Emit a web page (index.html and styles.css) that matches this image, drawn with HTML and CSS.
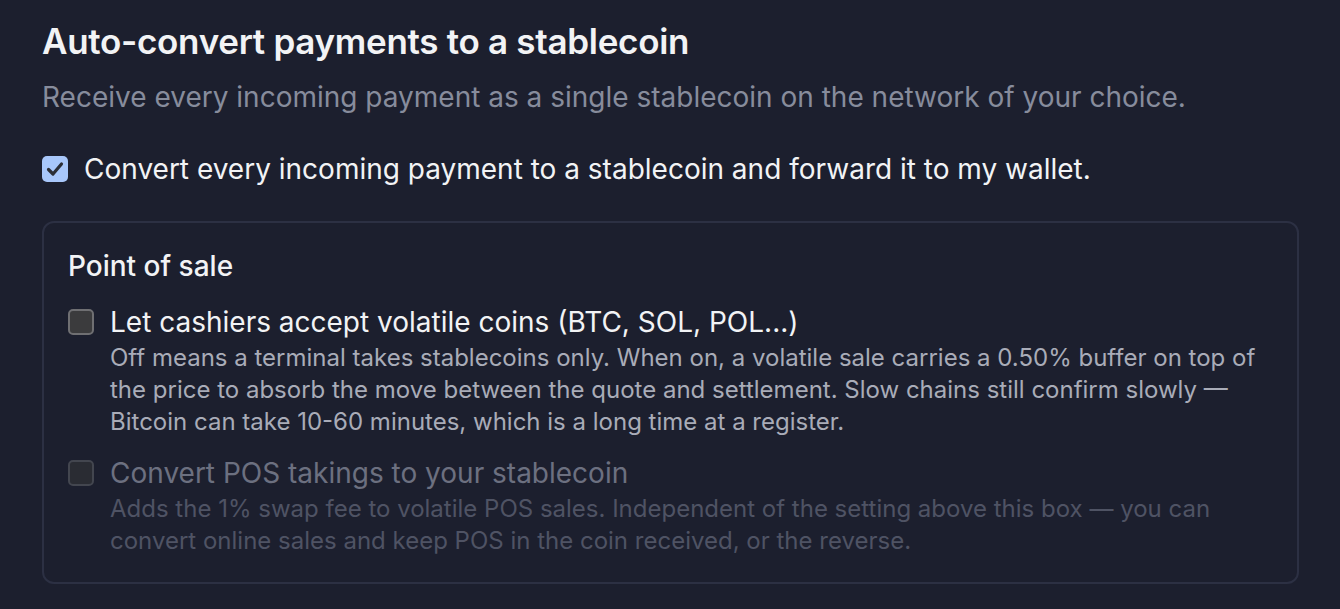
FILE: index.html
```html
<!DOCTYPE html>
<html lang="en">
<head>
  <meta charset="UTF-8">
  <title>Auto-convert settings</title>
  <link rel="stylesheet" href="styles.css">
</head>
<body>

<section class="settings">
  <h2>Auto-convert payments to a stablecoin</h2>
  <p class="lead">Receive every incoming payment as a single stablecoin on the network of your choice.</p>

  <label class="main-toggle">
    <span class="box checked">
      <svg viewBox="0 0 26 26" width="26" height="26"><path d="M6.5 13.5l4.5 4.5 8.5-10" fill="none" stroke="#2b2e36" stroke-width="3.2" stroke-linecap="round" stroke-linejoin="round"/></svg>
    </span>
    <span>Convert every incoming payment to a stablecoin and forward it to my wallet.</span>
  </label>

  <div class="pos-card">
    <h3>Point of sale</h3>

    <div class="option">
      <span class="box"></span>
      <div>
        <div class="option-title">Let cashiers accept volatile coins (BTC, SOL, POL...)</div>
        <div class="option-desc">Off means a terminal takes stablecoins only. When on, a volatile sale carries a 0.50% buffer on top of the price to absorb the move between the quote and settlement. Slow chains still confirm slowly — Bitcoin can take 10-60 minutes, which is a long time at a register.</div>
      </div>
    </div>

    <div class="option disabled">
      <span class="box"></span>
      <div>
        <div class="option-title">Convert POS takings to your stablecoin</div>
        <div class="option-desc">Adds the 1% swap fee to volatile POS sales. Independent of the setting above this box — you can convert online sales and keep POS in the coin received, or the reverse.</div>
      </div>
    </div>
  </div>
</section>

</body>
</html>
```

FILE: styles.css
```css
:root {
  --bg: #1c1f2e;
  --border: #2c3043;
  --text: #f2f3f5;
  --muted: #878c9c;
  --sub: #a9acb8;
  --dim: #6c7080;
  --dim-sub: #4f5364;
}
body {
  margin: 0;
  background: var(--bg);
  color: var(--text);
  font-family: Inter, "Noto Sans", sans-serif;
}
.settings {
  padding: 18px 41px 26px 42px;
}
h2 {
  margin: 0;
  font-size: 35px;
  font-weight: 600;
  line-height: 46px;
  letter-spacing: -0.3px;
}
.lead {
  margin: 13px 0 0;
  font-size: 28px;
  line-height: 40px;
  color: var(--muted);
}
.main-toggle {
  display: flex;
  align-items: center;
  gap: 16px;
  margin-top: 32px;
  font-size: 28px;
  line-height: 40px;
}
.box {
  flex: none;
  width: 26px;
  height: 26px;
  box-sizing: border-box;
  border-radius: 5px;
  border: 2px solid #6f6f72;
  background: #3b3b3d;
}
.box.checked {
  border: none;
  background: #a8c7fa;
}
.box svg { display: block; }
.pos-card {
  margin-top: 32px;
  border: 2px solid var(--border);
  border-radius: 12px;
  padding: 24px 24px 25px;
}
h3 {
  margin: 0 0 18px;
  font-size: 28px;
  font-weight: 500;
  line-height: 38px;
}
.option {
  display: flex;
  gap: 16px;
  align-items: flex-start;
}
.option + .option { margin-top: 16px; }
.option .box { margin-top: 6px; }
.option-title {
  font-size: 28px;
  line-height: 39px;
}
.option-desc {
  font-size: 24px;
  line-height: 32px;
  color: var(--sub);
}
.option.disabled .box {
  background: #2a2c33;
  border-color: #43464f;
}
.option.disabled .option-title { color: var(--dim); }
.option.disabled .option-desc { color: var(--dim-sub); }
```
